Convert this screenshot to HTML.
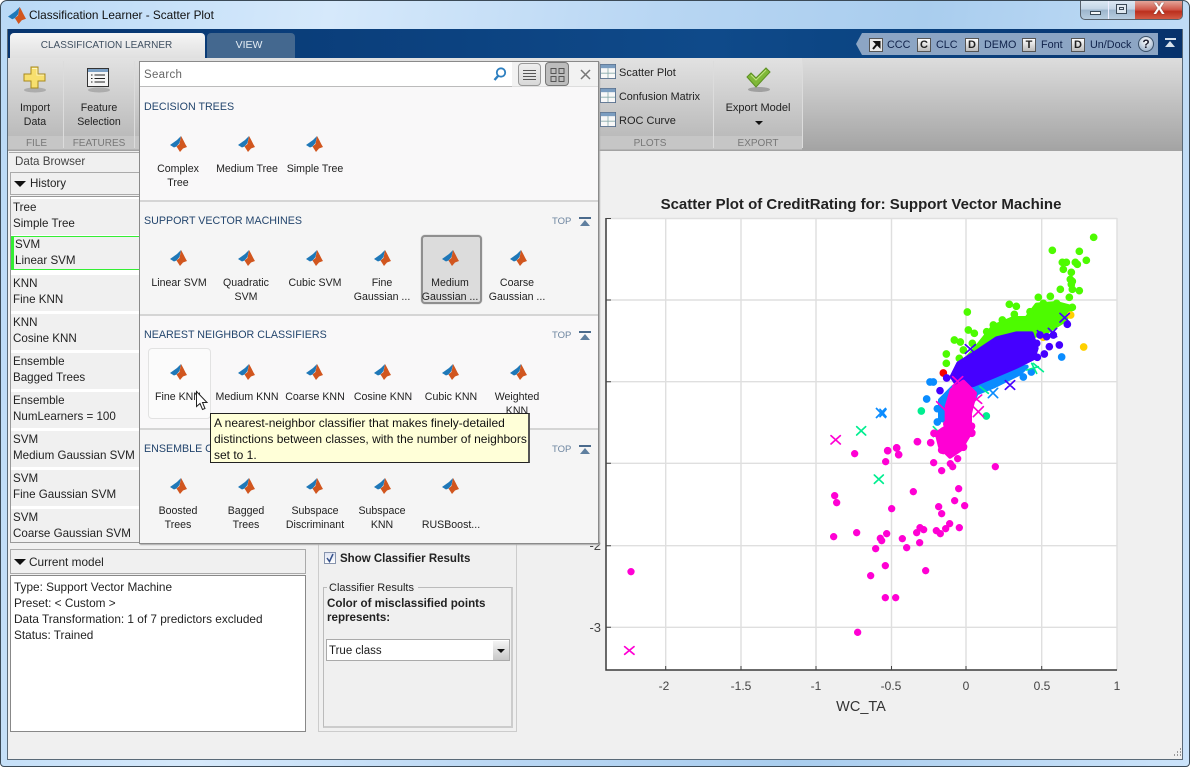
<!DOCTYPE html>
<html><head><meta charset="utf-8"><style>
html,body{margin:0;padding:0;width:1190px;height:767px;overflow:hidden;background:#fff}
*{box-sizing:border-box}
body{font-family:"Liberation Sans",sans-serif;font-size:12px;color:#1a1a1a;position:relative}
.a{position:absolute}
.t{position:absolute;white-space:nowrap;line-height:14px}
.c{position:absolute;text-align:center;line-height:14px;white-space:nowrap;transform:translateX(-50%);color:#222}
.h{position:absolute;color:#24466e;font-size:11px;line-height:13px;white-space:nowrap}
.top{position:absolute;color:#6d85a0;font-size:9.5px;left:552px;line-height:12px}
.arr{position:absolute;left:579px;width:12px;height:9px;border-top:2px solid #4a6a8c}
.arr:after{content:"";position:absolute;left:1px;top:1px;border-left:5px solid transparent;border-right:5px solid transparent;border-bottom:6px solid #5f7f9f}
.g{position:absolute;color:#777;font-size:10px;text-align:center;top:138px;line-height:12px}
.sep{position:absolute;top:61px;height:87px;width:1px;background:#b5b5b5;border-right:1px solid #dcdcdc}
.qb{position:absolute;top:38px;width:14px;height:14px;background:linear-gradient(#fff,#bbb);border:1px solid #555;font:bold 11px/12px "Liberation Sans",sans-serif;text-align:center;color:#222}
.ql{position:absolute;top:38px;font-size:10.8px;line-height:14px;color:#10224a;white-space:nowrap}
.item{position:absolute;left:11px;width:129px;height:36px;background:#f0f0f0;padding:1px 0 0 2px;line-height:16px;color:#222;white-space:nowrap;font-size:11.6px}
</style></head><body>
<svg width="0" height="0" style="position:absolute"><defs>
<symbol id="m" viewBox="0 0 17 17"><path d="M0 10L7 5 11 1 9.500 8 6.500 11.500 4 12.500Z" fill="#1f78b8"/><path d="M11 1C13 4 15 9 17 12L13 13.500 10 17 6.500 11.500 9.500 9Z" fill="#d1561f"/></symbol>
<symbol id="tb" viewBox="0 0 19 18"><rect x=".5" y=".5" width="18" height="17" fill="#f8f8f8" stroke="#4a6484"/><rect x="1" y="1" width="17" height="4" fill="#7b9dc0"/><path d="M1 11H18M9.500 5V17" stroke="#8aa" fill="none"/></symbol>
</defs></svg>

<!-- window frame -->
<div class="a" style="left:0;top:0;width:1190px;height:767px;border-radius:7px 7px 4px 4px;background:linear-gradient(100deg,#b9d9f6 0,#d6e9fb 25%,#b8d6f3 50%,#a9cdee 70%,#cbe3fa 100%);border:1px solid #3b4a57"></div>
<div class="t" style="left:29px;top:8px;font-size:11.8px;color:#111">Classification Learner - Scatter Plot</div>
<svg class="a" style="left:8px;top:6px" width="18" height="18"><use href="#m" width="18" height="18"/></svg>
<div class="a" style="left:1080px;top:1px;width:103px;height:19px;border:1px solid #56606b;border-top:0;border-radius:0 0 5px 5px;overflow:hidden;background:linear-gradient(#dce8f3 0,#c3d5e6 45%,#9db5cc 50%,#b8cde0 100%)">
<div class="a" style="left:27px;top:0;width:1px;height:19px;background:#eef"></div>
<div class="a" style="left:54px;top:0;width:48px;height:19px;background:linear-gradient(#e3a69a 0,#d0584a 45%,#bb2f1d 55%,#d6604a 100%)"></div>
<div class="a" style="left:9px;top:10px;width:11px;height:4px;background:#f4f6f8;border:1px solid #3b4a57"></div>
<div class="a" style="left:35px;top:3px;width:11px;height:10px;border:1px solid #3b4a57;background:#dfe8f0"><div class="a" style="left:2px;top:2px;width:5px;height:3px;border:1px solid #3b4a57"></div></div>
<div class="a" style="left:65px;top:-2px;width:26px;text-align:center;color:#fff;font:bold 17px/20px 'Liberation Sans',sans-serif;text-shadow:0 0 1px #333">X</div>
</div>

<!-- content -->
<div class="a" style="left:7px;top:29px;width:1176px;height:731px;background:#f0f0f0;border:1px solid #5a6a78;border-top:0"></div>
<div class="a" style="left:8px;top:29px;width:1174px;height:29px;background:linear-gradient(90deg,#07356f,#0f4a8a 60%,#0b4482 75%,#07326b)"></div>
<div class="a" style="left:10px;top:33px;width:195px;height:26px;background:linear-gradient(#f5f5f5,#dfdfdf);border-radius:4px 4px 0 0;text-align:center;font-size:10px;line-height:26px;color:#3f4f60;padding-right:2px">CLASSIFICATION LEARNER</div>
<div class="a" style="left:207px;top:33px;width:88px;height:25px;background:#44688f;border-radius:4px 4px 0 0;text-align:center;font-size:10.5px;line-height:24px;color:#e4edf5;padding-right:4px">VIEW</div>

<!-- quick access -->
<div class="a" style="left:856px;top:33px;width:302px;height:22px;background:#8ca5c4;clip-path:polygon(6px 0,100% 0,100% 100%,6px 100%,0 50%)"></div>
<div class="qb" style="left:869px;background:#fff"><svg width="12" height="12" style="display:block"><rect width="12" height="12" fill="#e8e8e8"/><path d="M3 10L8 4M5 3H9.500V7.500Z" stroke="#111" stroke-width="2" fill="#111"/></svg></div><div class="ql" style="left:887px">CCC</div>
<div class="qb" style="left:917px">C</div><div class="ql" style="left:936px">CLC</div>
<div class="qb" style="left:965px">D</div><div class="ql" style="left:984px">DEMO</div>
<div class="qb" style="left:1022px">T</div><div class="ql" style="left:1041px">Font</div>
<div class="qb" style="left:1071px">D</div><div class="ql" style="left:1090px">Un/Dock</div>
<div class="a" style="left:1138px;top:36px;width:16px;height:16px;border-radius:50%;background:radial-gradient(circle at 50% 30%,#fff,#8ba4c2);border:1px solid #3a5068;font:bold 12px/14px 'Liberation Sans',sans-serif;text-align:center;color:#223">?</div>
<div class="a" style="left:1165px;top:38px;width:11px;height:2px;background:#d8e2ec"></div>
<div class="a" style="left:1165px;top:41px;border-left:5.5px solid transparent;border-right:5.5px solid transparent;border-bottom:6px solid #d8e2ec"></div>

<!-- ribbon -->
<div class="a" style="left:8px;top:58px;width:1174px;height:93px;background:linear-gradient(#dddddd,#a3a3a3)"></div>
<div class="a" style="left:8px;top:58px;width:794px;height:92px;background:linear-gradient(#e2e2e2,#b4b4b4)"></div>
<div class="a" style="left:8px;top:136px;width:794px;height:13px;background:#c6c6c6"></div>
<div class="sep" style="left:63px"></div><div class="sep" style="left:134px"></div><div class="sep" style="left:713px"></div><div class="sep" style="left:802px"></div>
<svg class="a" style="left:22px;top:66px" width="26" height="28"><ellipse cx="13" cy="24" rx="11" ry="2.500" fill="#888" opacity=".5"/><path d="M9 1H16V8H23V15H16V22H9V15H2V8H9Z" fill="#f7df6e" stroke="#a88a1d"/><path d="M10 2.500H15V9H22" fill="none" stroke="#fff6c0"/></svg>
<svg class="a" style="left:87px;top:68px" width="24" height="26"><ellipse cx="12" cy="22" rx="11" ry="2.500" fill="#888" opacity=".5"/><rect x=".5" y=".5" width="21" height="18" fill="#f5f5f5" stroke="#333"/><rect x="1" y="1" width="20" height="3" fill="#7ca0c4"/><path d="M4 7H5.500M7.500 7H18M4 10.500H5.500M7.500 10.500H18M4 14H5.500M7.500 14H18" stroke="#222"/></svg>
<div class="c" style="left:35px;top:101px;font-size:10.6px">Import<br>Data</div>
<div class="c" style="left:99px;top:101px;font-size:10.6px">Feature<br>Selection</div>
<div class="g" style="left:10px;width:53px">FILE</div>
<div class="g" style="left:64px;width:70px">FEATURES</div>
<div class="g" style="left:600px;width:100px">PLOTS</div>
<div class="g" style="left:714px;width:88px">EXPORT</div>
<svg class="a" style="left:600px;top:64px" width="16" height="15"><use href="#tb" width="16" height="15"/></svg>
<svg class="a" style="left:600px;top:88px" width="16" height="15"><use href="#tb" width="16" height="15"/></svg>
<svg class="a" style="left:600px;top:112px" width="16" height="15"><use href="#tb" width="16" height="15"/></svg>
<div class="t" style="left:619px;top:66px;font-size:11px;color:#222">Scatter Plot</div>
<div class="t" style="left:619px;top:90px;font-size:10.8px;color:#222">Confusion Matrix</div>
<div class="t" style="left:619px;top:114px;font-size:11px;color:#222">ROC Curve</div>
<svg class="a" style="left:745px;top:66px" width="28" height="28"><ellipse cx="14" cy="23.500" rx="11" ry="2.500" fill="#777" opacity=".55"/><path d="M2 11L6 7 11 12 21 2 25 6 11 21Z" fill="#7fb838" stroke="#5c8f22"/><path d="M6 9L11 14 21 4" fill="none" stroke="#bfe27e"/></svg>
<div class="c" style="left:758px;top:101px;font-size:11px">Export Model</div>
<div class="a" style="left:755px;top:121px;border-left:4px solid transparent;border-right:4px solid transparent;border-top:4px solid #111"></div>

<!-- left -->
<div class="a" style="left:9px;top:152px;width:135px;height:20px;background:#f0f0f0;border-top:1px solid #aaa;padding:1px 0 0 6px;line-height:16px;color:#444;font-size:11.6px">Data Browser</div>
<div class="a" style="left:10px;top:172px;width:134px;height:23px;background:#f0f0f0;border:1px solid #aaa;padding:3px 0 0 19px;line-height:16px;color:#222;font-size:11.6px">History</div>
<div class="a" style="left:14px;top:181px;border-left:6px solid transparent;border-right:6px solid transparent;border-top:6px solid #111"></div>
<div class="a" style="left:10px;top:196px;width:134px;height:347px;background:#fff;border:1px solid #999"></div>
<div class="item" style="top:199px">Tree<br>Simple Tree</div>
<div class="item" style="top:236px;left:11px;height:34px;border:1px solid #33ee33;border-left:3px solid #33ee33;padding:0 0 0 1px">SVM<br>Linear SVM</div>
<div class="item" style="top:275px">KNN<br>Fine KNN</div>
<div class="item" style="top:314px">KNN<br>Cosine KNN</div>
<div class="item" style="top:353px">Ensemble<br>Bagged Trees</div>
<div class="item" style="top:392px">Ensemble<br>NumLearners = 100</div>
<div class="item" style="top:431px">SVM<br>Medium Gaussian SVM</div>
<div class="item" style="top:470px">SVM<br>Fine Gaussian SVM</div>
<div class="item" style="top:509px;height:33px">SVM<br>Coarse Gaussian SVM</div>

<div class="a" style="left:10px;top:549px;width:296px;height:25px;background:#f0f0f0;border:1px solid #aaa;padding:4px 0 0 18px;line-height:16px;color:#222;font-size:11.8px">Current model</div>
<div class="a" style="left:14px;top:559px;border-left:6px solid transparent;border-right:6px solid transparent;border-top:6px solid #111"></div>
<div class="a" style="left:10px;top:575px;width:296px;height:157px;background:#fff;border:1px solid #888;padding:3px 0 0 3px;line-height:16px;color:#222;font-size:11.8px">Type: Support Vector Machine<br>Preset: &lt; Custom &gt;<br>Data Transformation: 1 of 7 predictors excluded<br>Status: Trained</div>

<div class="a" style="left:318px;top:540px;width:199px;height:192px;border:1px solid #ccc;border-top:0"></div>
<div class="a" style="left:324px;top:552px;width:12px;height:12px;border:1px solid #8794ad;background:linear-gradient(#dfe4f2,#fff)"><svg width="10" height="10" style="display:block"><path d="M2 5L4.500 8.500 8 1" fill="none" stroke="#34508a" stroke-width="1.500"/></svg></div>
<div class="t" style="left:340px;top:552px;font-weight:bold;font-size:11.5px;color:#222">Show Classifier Results</div>
<div class="a" style="left:323px;top:587px;width:190px;height:141px;border:1px solid #bbb;border-right:2px solid #ccc;border-bottom:2px solid #ccc"></div>
<div class="t" style="left:327px;top:581px;font-size:11px;background:#f0f0f0;padding:0 4px 0 2px;color:#222">Classifier Results</div>
<div class="t" style="left:327px;top:597px;font-weight:bold;font-size:11.6px;color:#222">Color of misclassified points<br>represents:</div>
<div class="a" style="left:326px;top:639px;width:184px;height:22px;background:#fff;border:1px solid #aaa;padding:4px 0 0 2px;line-height:14px;font-size:11.5px">True class</div>
<div class="a" style="left:493px;top:641px;width:16px;height:19px;background:linear-gradient(#f4f4f4,#c8c8c8)"></div>
<div class="a" style="left:497px;top:649px;border-left:4px solid transparent;border-right:4px solid transparent;border-top:4px solid #111"></div>

<!-- plot -->
<svg class="a" style="left:0;top:0" width="1190" height="767">
<rect x="606" y="218" width="511" height="452" fill="#fff"/>
<path d="M665.700 218V670M741 218V670M816 218V670M891.500 218V670M966 218V670M1041.700 218V670M1117 218V670M606 218.500H1117M606 300H1117M606 381.700H1117M606 463.300H1117M606 545.700H1117M606 627.300H1117" stroke="#dfdfdf" stroke-width="1.400" fill="none"/>
<path d="M606 218V670H1117" stroke="#3a3a3a" stroke-width="1.500" fill="none"/>
<path d="M606 218.500h5M606 300h5M606 381.700h5M606 463.300h5M606 545.700h5M606 627.300h5M665.700 670v-4M741 670v-4M816 670v-4M891.500 670v-4M966 670v-4M1041.700 670v-4" stroke="#444" fill="none"/>
<g font-family="Liberation Sans,sans-serif" font-size="12" fill="#444">
<text x="601" y="550" text-anchor="end" font-size="13">-2</text><text x="601" y="632" text-anchor="end" font-size="13">-3</text>
<g text-anchor="middle"><text x="664" y="690">-2</text><text x="741" y="690">-1.5</text><text x="816" y="690">-1</text><text x="891" y="690">-0.5</text><text x="966" y="690">0</text><text x="1042" y="690">0.5</text><text x="1117" y="690">1</text></g>
</g>
<text x="861" y="711" text-anchor="middle" font-family="Liberation Sans,sans-serif" font-size="14.5" fill="#333">WC_TA</text>
<text x="861" y="209" text-anchor="middle" font-family="Liberation Sans,sans-serif" font-size="15" font-weight="bold" fill="#222">Scatter Plot of CreditRating for: Support Vector Machine</text>

<!-- dots upper cloud, zoom coords -->
<g transform="translate(880,220) scale(.33333)" stroke-linecap="round" fill="none" stroke-linejoin="round">
<path d="M641 52h0M517 91h0M598 94h0M547 127h0M559 127h0M586 127h0M592 133h0M619 121h0M550 148h0M574 157h0M571 178h0M577 184h0M574 193h0M577 208h0M541 208h0M598 212h0M568 232h0M475 232h0M511 229h0M388 253h0M409 259h0M262 276h0M265 330h0M283 340h0M223 360h0M241 366h0M277 370h0M250 390h0M199 402h0M199 430h0M238 415h0M367 300h0M403 283h0M577 262h0M340 315h0M320 335h0M450 275h0M490 250h0M530 250h0M555 268h0" stroke="#4dfb00" stroke-width="23"/>
<path d="M240 440L300 370 340 320 365 310 400 295 440 295 470 255 530 250 575 262 555 300 500 335 440 355 380 375 320 395 270 420Z" fill="#4dfb00" stroke="#4dfb00" stroke-width="14"/>
<path d="M611 381h0M490 352h0M572 285h0" stroke="#ffd000" stroke-width="23"/>
<path d="M190 459h0" stroke="#f50000" stroke-width="23"/>
<path d="M545 411h0M430 471h0M454 456h0M394 462h0M160 486h0M150 486h0M140 537h0M172 566h0M172 606h0M358 480h0M300 510h0M190 540h0M230 510h0" stroke="#0a8cff" stroke-width="23"/>
<path d="M180 540L220 500 300 480 400 445 440 440 420 460 340 500 290 520 250 610 180 600Z" fill="#0a8cff" stroke="#0a8cff" stroke-width="12"/>
<path d="M124 573h0M319 588h0" stroke="#00ee90" stroke-width="23"/>
<path d="M160 620L190 650M185 625L160 650M440 450L475 440M460 430L490 455M470 460L455 430M300 500L325 520" stroke="#00ee90" stroke-width="5"/>
<path d="M215 470L235 430 290 395 350 355 410 340 455 340 470 385 460 415 410 440 340 470 280 495 235 500Z" fill="#4500ff" stroke="#4500ff" stroke-width="12"/>
<path d="M562 313h0M508 380h0M538 375h0M493 402h0M472 412h0M180 512h0M200 474h0M470 370h0M500 350h0M520 345h0M480 345h0" stroke="#4500ff" stroke-width="23"/>
<path d="M540 280L568 306M568 280L540 306M256 374L286 400M286 374L256 400M376 482L404 508M404 482L376 508M430 340L458 366M458 340L430 366M472 332L500 358M505 325L530 350M530 325L505 350" stroke="#4500ff" stroke-width="5"/>
<path d="M325 505L353 533M353 505L325 533M0 568L18 590M18 568L0 590M175 570L205 595" stroke="#0a8cff" stroke-width="5"/>
<path d="M215 510L250 485 285 520 270 580 270 640 240 690 210 710 180 680 170 640 200 620 200 560Z" fill="#ff00d4" stroke="#ff00d4" stroke-width="12"/>
<path d="M218 470L248 498M248 470L218 498M240 490L270 520M280 560L310 590M310 560L280 590M170 545L200 575M275 525L305 550M305 525L275 550" stroke="#ff00d4" stroke-width="5"/>
<path d="M112 665h0M152 668h0M23 692h0M50 684h0M56 704h0M162 640h0M275 640h0M274 620h0M250 682h0M252 635h0M190 670h0M185 690h0" stroke="#ff00d4" stroke-width="23"/>
</g>
<g transform="translate(590,420) scale(.33333)" stroke-linecap="round" fill="none">
<path d="M123 455h0M803 637h0M886 533h0M917 533h0M842 467h0M886 437h0M1007 452h0M857 386h0M950 383h0M989 368h0M875 362h0M871 355h0M937 356h0M731 350h0M800 338h0M890 341h0M980 338h0M990 323h0M1001 329h0M1039 332h0M1051 341h0M1067 326h0M1079 311h0M1108 323h0M905 266h0M740 248h0M734 227h0M1046 260h0M1055 281h0M1094 242h0M1124 257h0M1106 206h0M970 215h0M1216 140h0M1055 152h0M1031 128h0M1081 131h0M1088 140h0M1103 116h0M887 125h0M794 101h0M893 92h0M920 83h0M926 104h0M983 65h0M1022 68h0M1055 77h0M1060 92h0M1078 98h0M1121 80h0M1146 38h0M1145 18h0M1033 40h0M1125 35h0M1108 85h0M1090 60h0M1070 12h0" stroke="#ff00d4" stroke-width="22"/>
<path d="M104 680L132 703M132 680L104 703M723 47L751 72M751 47L723 72" stroke="#ff00d4" stroke-width="5"/>
<path d="M800 20L827 45M827 20L800 45M853 165L880 190M880 165L853 190" stroke="#00ee90" stroke-width="5"/>
</g>
<path d="M876 408L886 418M886 408L876 418" stroke="#0a8cff" stroke-width="1.700"/>
</svg>

<!-- popup gallery -->
<div class="a" style="left:139px;top:61px;width:460px;height:483px;background:#f9f8f9;border:1px solid #8a8a8a;box-shadow:1px 1px 1px #aaa"></div>
<div class="a" style="left:140px;top:62px;width:372px;height:25px;background:#fff;border-bottom:1px solid #bbb;padding:6px 0 0 4px;color:#666;line-height:14px;font-size:11.5px;letter-spacing:.3px">Search</div>
<div class="a" style="left:512px;top:62px;width:86px;height:25px;background:#f2f2f2;border-bottom:1px solid #ddd"></div>
<svg class="a" style="left:492px;top:66px" width="16" height="16"><circle cx="9" cy="6.500" r="4.200" fill="none" stroke="#2d7fc0" stroke-width="1.800"/><path d="M6 10L2.500 14" stroke="#2d7fc0" stroke-width="2.400"/></svg>
<div class="a" style="left:518px;top:63px;width:23px;height:23px;border:1px solid #999;border-radius:4px;background:linear-gradient(#efefef,#d8d8d8)"><svg width="21" height="21" style="display:block"><path d="M4 6.500H17M4 9.500H17M4 12.500H17M4 15.500H17" stroke="#555"/></svg></div>
<div class="a" style="left:545px;top:62px;width:24px;height:24px;border:1px solid #777;border-radius:4px;background:#bdbdbd"><svg width="22" height="22" style="display:block"><path d="M5 5.500h5v5h-5zM13 5.500h5v5h-5zM5 13.500h5v5h-5zM13 13.500h5v5h-5z" fill="none" stroke="#555"/></svg></div>
<svg class="a" style="left:580px;top:69px" width="11" height="11"><path d="M1 1L10 10M10 1L1 10" stroke="#777" stroke-width="1.500"/></svg>

<div class="a" style="left:140px;top:200px;width:458px;height:2px;background:#d5d5d5"></div>
<div class="a" style="left:140px;top:202px;width:458px;height:112px;background:#f5f5f5"></div>
<div class="a" style="left:140px;top:314px;width:458px;height:2px;background:#d5d5d5"></div>
<div class="a" style="left:140px;top:428px;width:458px;height:2px;background:#d5d5d5"></div>
<div class="a" style="left:140px;top:430px;width:458px;height:113px;background:#f5f5f5"></div>

<div class="h" style="left:144px;top:101px;font-size:10.7px">DECISION TREES</div>
<div class="h" style="left:144px;top:215px;font-size:10.7px">SUPPORT VECTOR MACHINES</div>
<div class="h" style="left:144px;top:329px;font-size:10.7px">NEAREST NEIGHBOR CLASSIFIERS</div>
<div class="h" style="left:144px;top:443px;font-size:10.7px">ENSEMBLE CLASSIFIERS</div>
<div class="top" style="top:216px">TOP</div><div class="arr" style="top:217px"></div>
<div class="top" style="top:330px">TOP</div><div class="arr" style="top:331px"></div>
<div class="top" style="top:444px">TOP</div><div class="arr" style="top:445px"></div>

<div class="a" style="left:421px;top:235px;width:61px;height:69px;background:#dcdcdc;border:2px solid #8f8f8f;border-radius:4px;box-shadow:0 0 1px #999"></div>
<div class="a" style="left:148px;top:348px;width:63px;height:71px;background:#fbfbfb;border:1px solid #e2e2e2;border-radius:4px"></div>

<svg class="a" style="left:0;top:0" width="600" height="545">
<g><use href="#m" x="170" y="135" width="17" height="17"/><use href="#m" x="238" y="135" width="17" height="17"/><use href="#m" x="306" y="135" width="17" height="17"/>
<use href="#m" x="170" y="249" width="17" height="17"/><use href="#m" x="238" y="249" width="17" height="17"/><use href="#m" x="306" y="249" width="17" height="17"/><use href="#m" x="374" y="249" width="17" height="17"/><use href="#m" x="442" y="249" width="17" height="17"/><use href="#m" x="510" y="249" width="17" height="17"/>
<use href="#m" x="170" y="363" width="17" height="17"/><use href="#m" x="238" y="363" width="17" height="17"/><use href="#m" x="306" y="363" width="17" height="17"/><use href="#m" x="374" y="363" width="17" height="17"/><use href="#m" x="442" y="363" width="17" height="17"/><use href="#m" x="510" y="363" width="17" height="17"/>
<use href="#m" x="170" y="477" width="17" height="17"/><use href="#m" x="238" y="477" width="17" height="17"/><use href="#m" x="306" y="477" width="17" height="17"/><use href="#m" x="374" y="477" width="17" height="17"/><use href="#m" x="442" y="477" width="17" height="17"/></g></svg>

<div style="font-size:10.6px">
<div class="c" style="left:178px;top:162px">Complex<br>Tree</div><div class="c" style="left:247px;top:162px">Medium Tree</div><div class="c" style="left:315px;top:162px">Simple Tree</div>
<div class="c" style="left:179px;top:276px">Linear SVM</div><div class="c" style="left:246px;top:276px">Quadratic<br>SVM</div><div class="c" style="left:315px;top:276px">Cubic SVM</div><div class="c" style="left:382px;top:276px">Fine<br>Gaussian ...</div><div class="c" style="left:450px;top:276px">Medium<br>Gaussian ...</div><div class="c" style="left:517px;top:276px">Coarse<br>Gaussian ...</div>
<div class="c" style="left:178px;top:390px">Fine KNN</div><div class="c" style="left:247px;top:390px">Medium KNN</div><div class="c" style="left:315px;top:390px">Coarse KNN</div><div class="c" style="left:383px;top:390px">Cosine KNN</div><div class="c" style="left:451px;top:390px">Cubic KNN</div><div class="c" style="left:517px;top:390px">Weighted<br>KNN</div>
<div class="c" style="left:178px;top:504px">Boosted<br>Trees</div><div class="c" style="left:246px;top:504px">Bagged<br>Trees</div><div class="c" style="left:315px;top:504px">Subspace<br>Discriminant</div><div class="c" style="left:382px;top:504px">Subspace<br>KNN</div><div class="c" style="left:451px;top:518px">RUSBoost...</div>
</div>

<div class="a" style="left:210px;top:413px;width:320px;height:50px;background:#ffffd8;border:1px solid #222;border-right:2px solid #555;padding:1px 0 0 3px;line-height:16px;color:#111;white-space:nowrap;font-size:12px">A nearest-neighbor classifier that makes finely-detailed<br>distinctions between classes, with the number of neighbors<br>set to 1.</div>
<svg class="a" style="left:195px;top:390px" width="14" height="22"><path d="M1.500 1.500V16.500L5 13.500 7.500 19.500 10 18.500 7.500 12.500H12Z" fill="#fff" stroke="#222"/></svg>

<svg class="a" style="left:1170px;top:747px" width="12" height="12"><path d="M10 2h1M7 5h1M10 5h1M4 8h1M7 8h1M10 8h1" stroke="#999" stroke-width="2"/></svg>
</body></html>
